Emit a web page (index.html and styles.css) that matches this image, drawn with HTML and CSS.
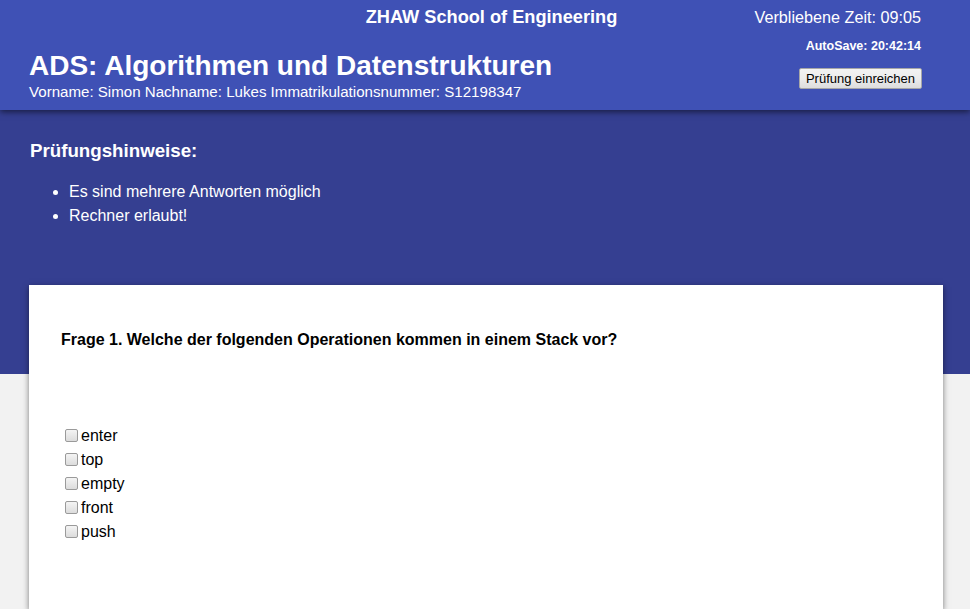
FILE: index.html
```html
<!DOCTYPE html>
<html lang="de">
<head>
<meta charset="utf-8">
<title>ADS: Algorithmen und Datenstrukturen</title>
<link rel="stylesheet" href="styles.css">
</head>
<body>
<header class="topbar">
  <div class="brand">ZHAW School of Engineering</div>
  <div class="timer">Verbliebene Zeit: 09:05</div>
  <div class="exam-title">
    <h1>ADS: Algorithmen und Datenstrukturen</h1>
    <div class="student">Vorname: Simon Nachname: Lukes Immatrikulationsnummer: S12198347</div>
  </div>
  <div class="actions">
    <div class="autosave">AutoSave: 20:42:14</div>
    <button class="submit" type="button">Prüfung einreichen</button>
  </div>
</header>
<section class="notes">
  <h2>Prüfungshinweise:</h2>
  <ul>
    <li>Es sind mehrere Antworten möglich</li>
    <li>Rechner erlaubt!</li>
  </ul>
</section>
<main class="card">
  <h3 class="question">Frage 1. Welche der folgenden Operationen kommen in einem Stack vor?</h3>
  <div class="answers">
    <label class="answer"><input type="checkbox">enter</label>
    <label class="answer"><input type="checkbox">top</label>
    <label class="answer"><input type="checkbox">empty</label>
    <label class="answer"><input type="checkbox">front</label>
    <label class="answer"><input type="checkbox">push</label>
  </div>
</main>
</body>
</html>
```
FILE: styles.css
```css
html, body {
  margin: 0;
  padding: 0;
}
body {
  background: #f2f2f2;
  font-family: "Liberation Sans", Arial, sans-serif;
  color: #000;
  overflow: hidden;
}
.topbar {
  position: relative;
  z-index: 2;
  box-sizing: border-box;
  height: 110px;
  background: #3f51b5;
  color: #fff;
  padding: 0 48px 0 29px;
  display: grid;
  grid-template-columns: 1fr auto;
  grid-template-rows: 27px auto;
  box-shadow: 0 2px 6px rgba(0, 0, 0, 0.55);
}
.brand {
  grid-column: 1 / -1;
  grid-row: 1;
  justify-self: center;
  margin-left: 32px;
  margin-top: 7px;
  font-size: 18.2px;
  line-height: 20px;
  font-weight: bold;
}
.timer {
  grid-column: 2;
  grid-row: 1;
  justify-self: end;
  margin-top: 7px;
  margin-right: 1px;
  font-size: 16.2px;
  line-height: 20px;
}
.exam-title {
  grid-column: 1;
  grid-row: 2;
  margin-top: 23px;
}
.exam-title h1 {
  margin: 0;
  font-size: 28px;
  line-height: 32px;
  font-weight: bold;
}
.student {
  margin-top: 2px;
  font-size: 15.1px;
  line-height: 16px;
}
.actions {
  grid-column: 2;
  grid-row: 2;
  display: flex;
  flex-direction: column;
  align-items: flex-end;
}
.autosave {
  margin-top: 12px;
  margin-right: 1px;
  font-size: 12.5px;
  line-height: 14px;
  font-weight: bold;
}
.submit {
  margin-top: 15px;
  box-sizing: border-box;
  width: 123px;
  height: 21px;
  padding: 0 4px;
  font-family: "Liberation Sans", Arial, sans-serif;
  font-size: 13px;
  color: #000;
  background: linear-gradient(#f3f3f3, #ececec 50%, #dddddd);
  border: 1px solid #a7a7a7;
  border-radius: 2px;
}
.notes {
  position: relative;
  z-index: 1;
  box-sizing: border-box;
  height: 264px;
  background: #353f91;
  color: #fff;
  padding: 30px 0 0 30px;
}
.notes h2 {
  margin: 0;
  font-size: 18.72px;
  line-height: 22px;
  font-weight: bold;
}
.notes ul {
  margin: 18px 0 0;
  padding-left: 39px;
  font-size: 16px;
  line-height: 24px;
}
.card {
  position: relative;
  z-index: 3;
  display: block;
  box-sizing: border-box;
  width: 914px;
  height: 324px;
  margin: -89px 0 0 29px;
  background: #fff;
  box-shadow: 0 2px 6px rgba(0, 0, 0, 0.5);
  padding: 45px 32px 0;
}
.question {
  margin: 0;
  font-size: 16px;
  line-height: 20px;
  font-weight: bold;
}
.answers {
  margin-top: 74px;
  display: flex;
  flex-direction: column;
}
.answer {
  font-size: 16px;
  line-height: 24px;
  display: block;
}
.answer input {
  -webkit-appearance: none;
  appearance: none;
  box-sizing: border-box;
  width: 13px;
  height: 13px;
  margin: 0 3px 0 4px;
  vertical-align: -1px;
  border: 1px solid #9a9a9a;
  border-radius: 2px;
  background: linear-gradient(#f4f4f4, #dcdcdc);
}
```
